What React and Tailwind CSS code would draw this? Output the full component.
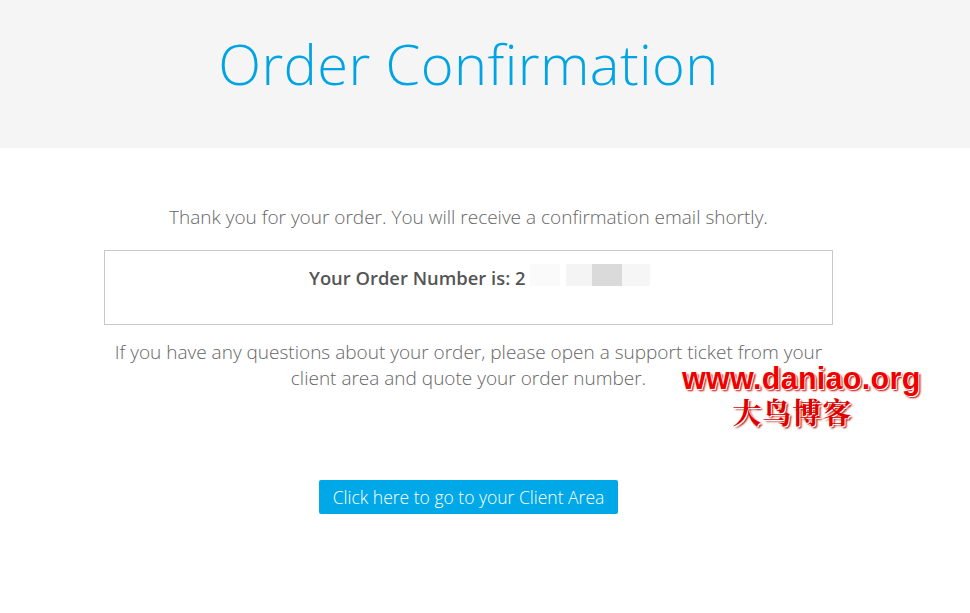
import React from 'react';

const App = () => {
  return (
    <div className="w-[970px] h-[613px] bg-white relative overflow-hidden"
      style={{ fontFamily: '"Open Sans", "Liberation Sans", sans-serif' }}>

      {/* ── Header band ── */}
      <div className="h-[148px] bg-[#f5f5f5] flex justify-center pt-[25px]">
        <div className="w-[729px] text-center ml-[-33px]">
          <h1 className="text-[56px] leading-[76px] font-light text-[#00a4e4] tracking-[0.4px]">
            Order Confirmation
          </h1>
        </div>
      </div>

      {/* ── Body ── */}
      <div className="ml-[104px] w-[729px] pt-[56px]">
        <p className="text-center text-[19px] leading-[26px] font-light text-[#666]">
          Thank you for your order. You will receive a confirmation email shortly.
        </p>

        <div className="mt-[20px] h-[75px] border border-[#c8c8c8] flex pl-[204px] pt-[14px]">
          <div className="flex items-start">
            <span className="text-[18.4px] leading-[26px] font-semibold text-[#555]">
              Your Order Number is: 2
            </span>
            {/* blurred number */}
            <div className="flex items-start ml-[4px] mt-[-1px]">
              <div className="w-[30px] h-[22px] bg-[#fafafa]" />
              <div className="w-[6px] h-[22px] bg-white" />
              <div className="w-[26px] h-[22px] bg-[#f4f4f4]" />
              <div className="w-[30px] h-[22px] bg-[#dadada]" />
              <div className="w-[28px] h-[22px] bg-[#f6f6f6]" />
            </div>
          </div>
        </div>

        <p className="mt-[14px] text-center text-[19px] leading-[26px] font-light text-[#666]">
          If you have any questions about your order, please open a support ticket from your
          client area and quote your order number.
        </p>

        <div className="mt-[89px] flex justify-center">
          <button className="w-[299px] h-[34px] bg-[#00a8e8] text-white text-[17.5px] font-light rounded-[2px]">
            Click here to go to your Client Area
          </button>
        </div>
      </div>

      {/* ── Watermark ── */}
      <div className="absolute left-[682px] top-[359px] flex flex-col items-center select-none">
        <span className="text-[30.5px] leading-[38px] font-bold text-[#f00000] tracking-[0.3px]"
          style={{ fontFamily: '"Liberation Sans", Arial, sans-serif', textShadow: '1px 1px 0 #fff, -1px -1px 0 #fff, 2px 2px 2px #b00' }}>
          www.daniao.org
        </span>
        <span className="mt-[-3px] ml-[-18px] text-[29px] leading-[36px] font-bold text-[#e00000] tracking-[1px]"
          style={{ fontFamily: '"Noto Serif CJK SC", "Noto Sans CJK SC", serif', textShadow: '1px 1px 0 #fff, 2px 2px 2px #a00' }}>
          大鸟博客
        </span>
      </div>
    </div>
  );
};

export default App;
